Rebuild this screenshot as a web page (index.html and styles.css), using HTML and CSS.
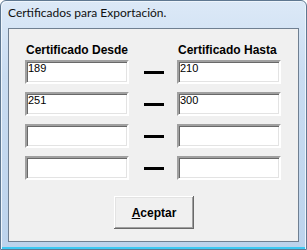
FILE: index.html
```html
<!doctype html>
<html lang="es">
  <head>
    <meta charset="utf-8">
    <title>Certificados para Exportación.</title>
    <link rel="stylesheet" href="styles.css">
  </head>
  <body>
    <div class="window">
      <div class="titlebar">Certificados para Exportación.</div>

      <div class="client">
        <div class="ranges ranges-head">
          <div class="label">Certificado Desde</div>
          <div></div>
          <div class="label">Certificado Hasta</div>
        </div>

        <div class="ranges">
          <input class="field" type="text" value="189">
          <span class="dash"></span>
          <input class="field" type="text" value="210">

          <input class="field" type="text" value="251">
          <span class="dash"></span>
          <input class="field" type="text" value="300">

          <input class="field" type="text" value="">
          <span class="dash"></span>
          <input class="field" type="text" value="">

          <input class="field" type="text" value="">
          <span class="dash"></span>
          <input class="field" type="text" value="">
        </div>

        <div class="actions">
          <button class="button" type="button"><u>A</u>ceptar</button>
        </div>
      </div>
    </div>
  </body>
</html>
```

FILE: styles.css
```css
html, body {
    margin: 0;
    background: #ffffff;
}

.window {
    box-sizing: border-box;
    width: 307px;
    height: 250px;
    padding: 0 7px 7px 7px;
    display: flex;
    flex-direction: column;
    border: 1px solid #5f7891;
    border-radius: 6px 6px 0 0;
    background: linear-gradient(180deg, #dce9f7 0%, #c9dcf1 30%, #bcd3ec 100%);
    box-shadow: inset 1px 1px 0 #eef5fc, inset -1px 0 0 #eef5fc, inset 0 -2px 0 #3cc9f3;
}

.titlebar {
    height: 27px;
    padding: 4px 0 0 0;
    box-sizing: border-box;
    font-family: "Segoe UI", Lato, "Liberation Sans", sans-serif;
    font-size: 12px;
    line-height: 16px;
    color: #101010;
}

.client {
    flex: 1;
    border: 1px solid #6f7f91;
    background: #f0f0f0;
    font-family: "Liberation Sans", Arial, sans-serif;
    padding: 14px 0 0 16px;
}

.ranges {
    display: grid;
    grid-template-columns: 104px 48px 104px;
    grid-auto-rows: 24px;
    row-gap: 8px;
}

.ranges-head {
    grid-auto-rows: 14px;
    margin-bottom: 3px;
}

.label {
    font-size: 12px;
    font-weight: bold;
    line-height: 14px;
    padding-left: 1px;
    color: #000;
    white-space: nowrap;
}

.field {
    box-sizing: border-box;
    width: 104px;
    height: 24px;
    margin: 0;
    padding: 0 2px 9px 1px;
    border: 2px solid;
    border-color: #a0a0a0 #ffffff #ffffff #a0a0a0;
    box-shadow: inset 1px 1px 0 #696969, inset -1px -1px 0 #e3e3e3;
    background: #ffffff;
    font-family: "Liberation Sans", Arial, sans-serif;
    font-size: 11px;
    line-height: 13px;
    color: #000;
    outline: none;
}

.dash {
    justify-self: center;
    align-self: center;
    width: 20px;
    height: 3px;
    margin-left: 2px;
    background: #000;
}

.actions {
    display: flex;
    justify-content: center;
    margin-top: 16px;
    padding-right: 16px;
}

.button {
    width: 80px;
    height: 33px;
    margin-left: 1px;
    padding: 0;
    border: none;
    background: #f0f0f0;
    box-shadow: inset -1px -1px 0 #696969, inset 1px 1px 0 #ffffff, inset -2px -2px 0 #a0a0a0, inset 2px 2px 0 #e3e3e3;
    font-family: "Liberation Sans", Arial, sans-serif;
    font-size: 12px;
    font-weight: bold;
    color: #000;
}
```
